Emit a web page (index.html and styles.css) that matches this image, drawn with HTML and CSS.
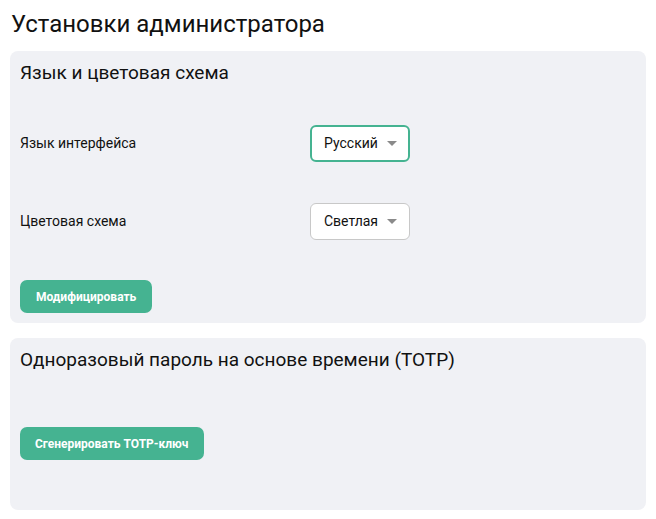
FILE: index.html
```html
<!DOCTYPE html>
<html lang="ru">
<head>
<meta charset="utf-8">
<link rel="stylesheet" href="styles.css">
</head>
<body>
<div class="page">
  <h1 class="title">Установки администратора</h1>
  <section class="card">
    <h2 class="card-title">Язык и цветовая схема</h2>
    <div class="row">
      <span class="label">Язык интерфейса</span>
      <div class="select focused"><span>Русский</span><i class="caret"></i></div>
    </div>
    <div class="row">
      <span class="label">Цветовая схема</span>
      <div class="select"><span>Светлая</span><i class="caret"></i></div>
    </div>
    <button class="btn btn-modify">Модифицировать</button>
  </section>
  <section class="card card-totp">
    <h2 class="card-title">Одноразовый пароль на основе времени (TOTP)</h2>
    <button class="btn btn-totp">Сгенерировать TOTP-ключ</button>
  </section>
</div>
</body>
</html>
```

FILE: styles.css
```css
* { box-sizing: border-box; }
html, body { margin: 0; padding: 0; background: #fff; }
body { font-family: Roboto, "Noto Sans", sans-serif; color: #111; }
.page { padding: 7px 10px 0 10px; display: flex; flex-direction: column; }
.title { margin: 0 0 10px 1px; font-size: 24px; font-weight: 400; line-height: 34px; }
.card { background: #f0f1f5; border-radius: 8px; padding: 9px 10px 10px 10px; display: flex; flex-direction: column; align-items: flex-start; }
.card + .card { margin-top: 15px; }
.card-title { margin: 0; font-size: 19px; font-weight: 400; line-height: 26px; }
.row { display: grid; grid-template-columns: 290px 100px; align-items: center; height: 78px; width: 100%; }
.row:first-of-type { margin-top: 18px; }
.label { font-size: 14px; }
.select { width: 100px; height: 37px; border: 1px solid #c8c8c8; background: #fff; border-radius: 6px; display: flex; align-items: center; justify-content: space-between; padding: 0 12px 0 13px; font-size: 14px; }
.select.focused { border: 2px solid #45b391; padding-left: 12px; padding-right: 11px; }
.caret { width: 0; height: 0; border-left: 5px solid transparent; border-right: 5px solid transparent; border-top: 5px solid #8a8a8a; }
.btn { border: 0; background: #45b391; color: #fff; font-family: Roboto, sans-serif; font-weight: 700; font-size: 12px; height: 33px; padding: 0 16px; border-radius: 7px; }
.btn-modify { margin-top: 20px; }
.card-totp { height: 172px; }
.btn-totp { margin-top: 54px; padding: 0 15px; }
```
